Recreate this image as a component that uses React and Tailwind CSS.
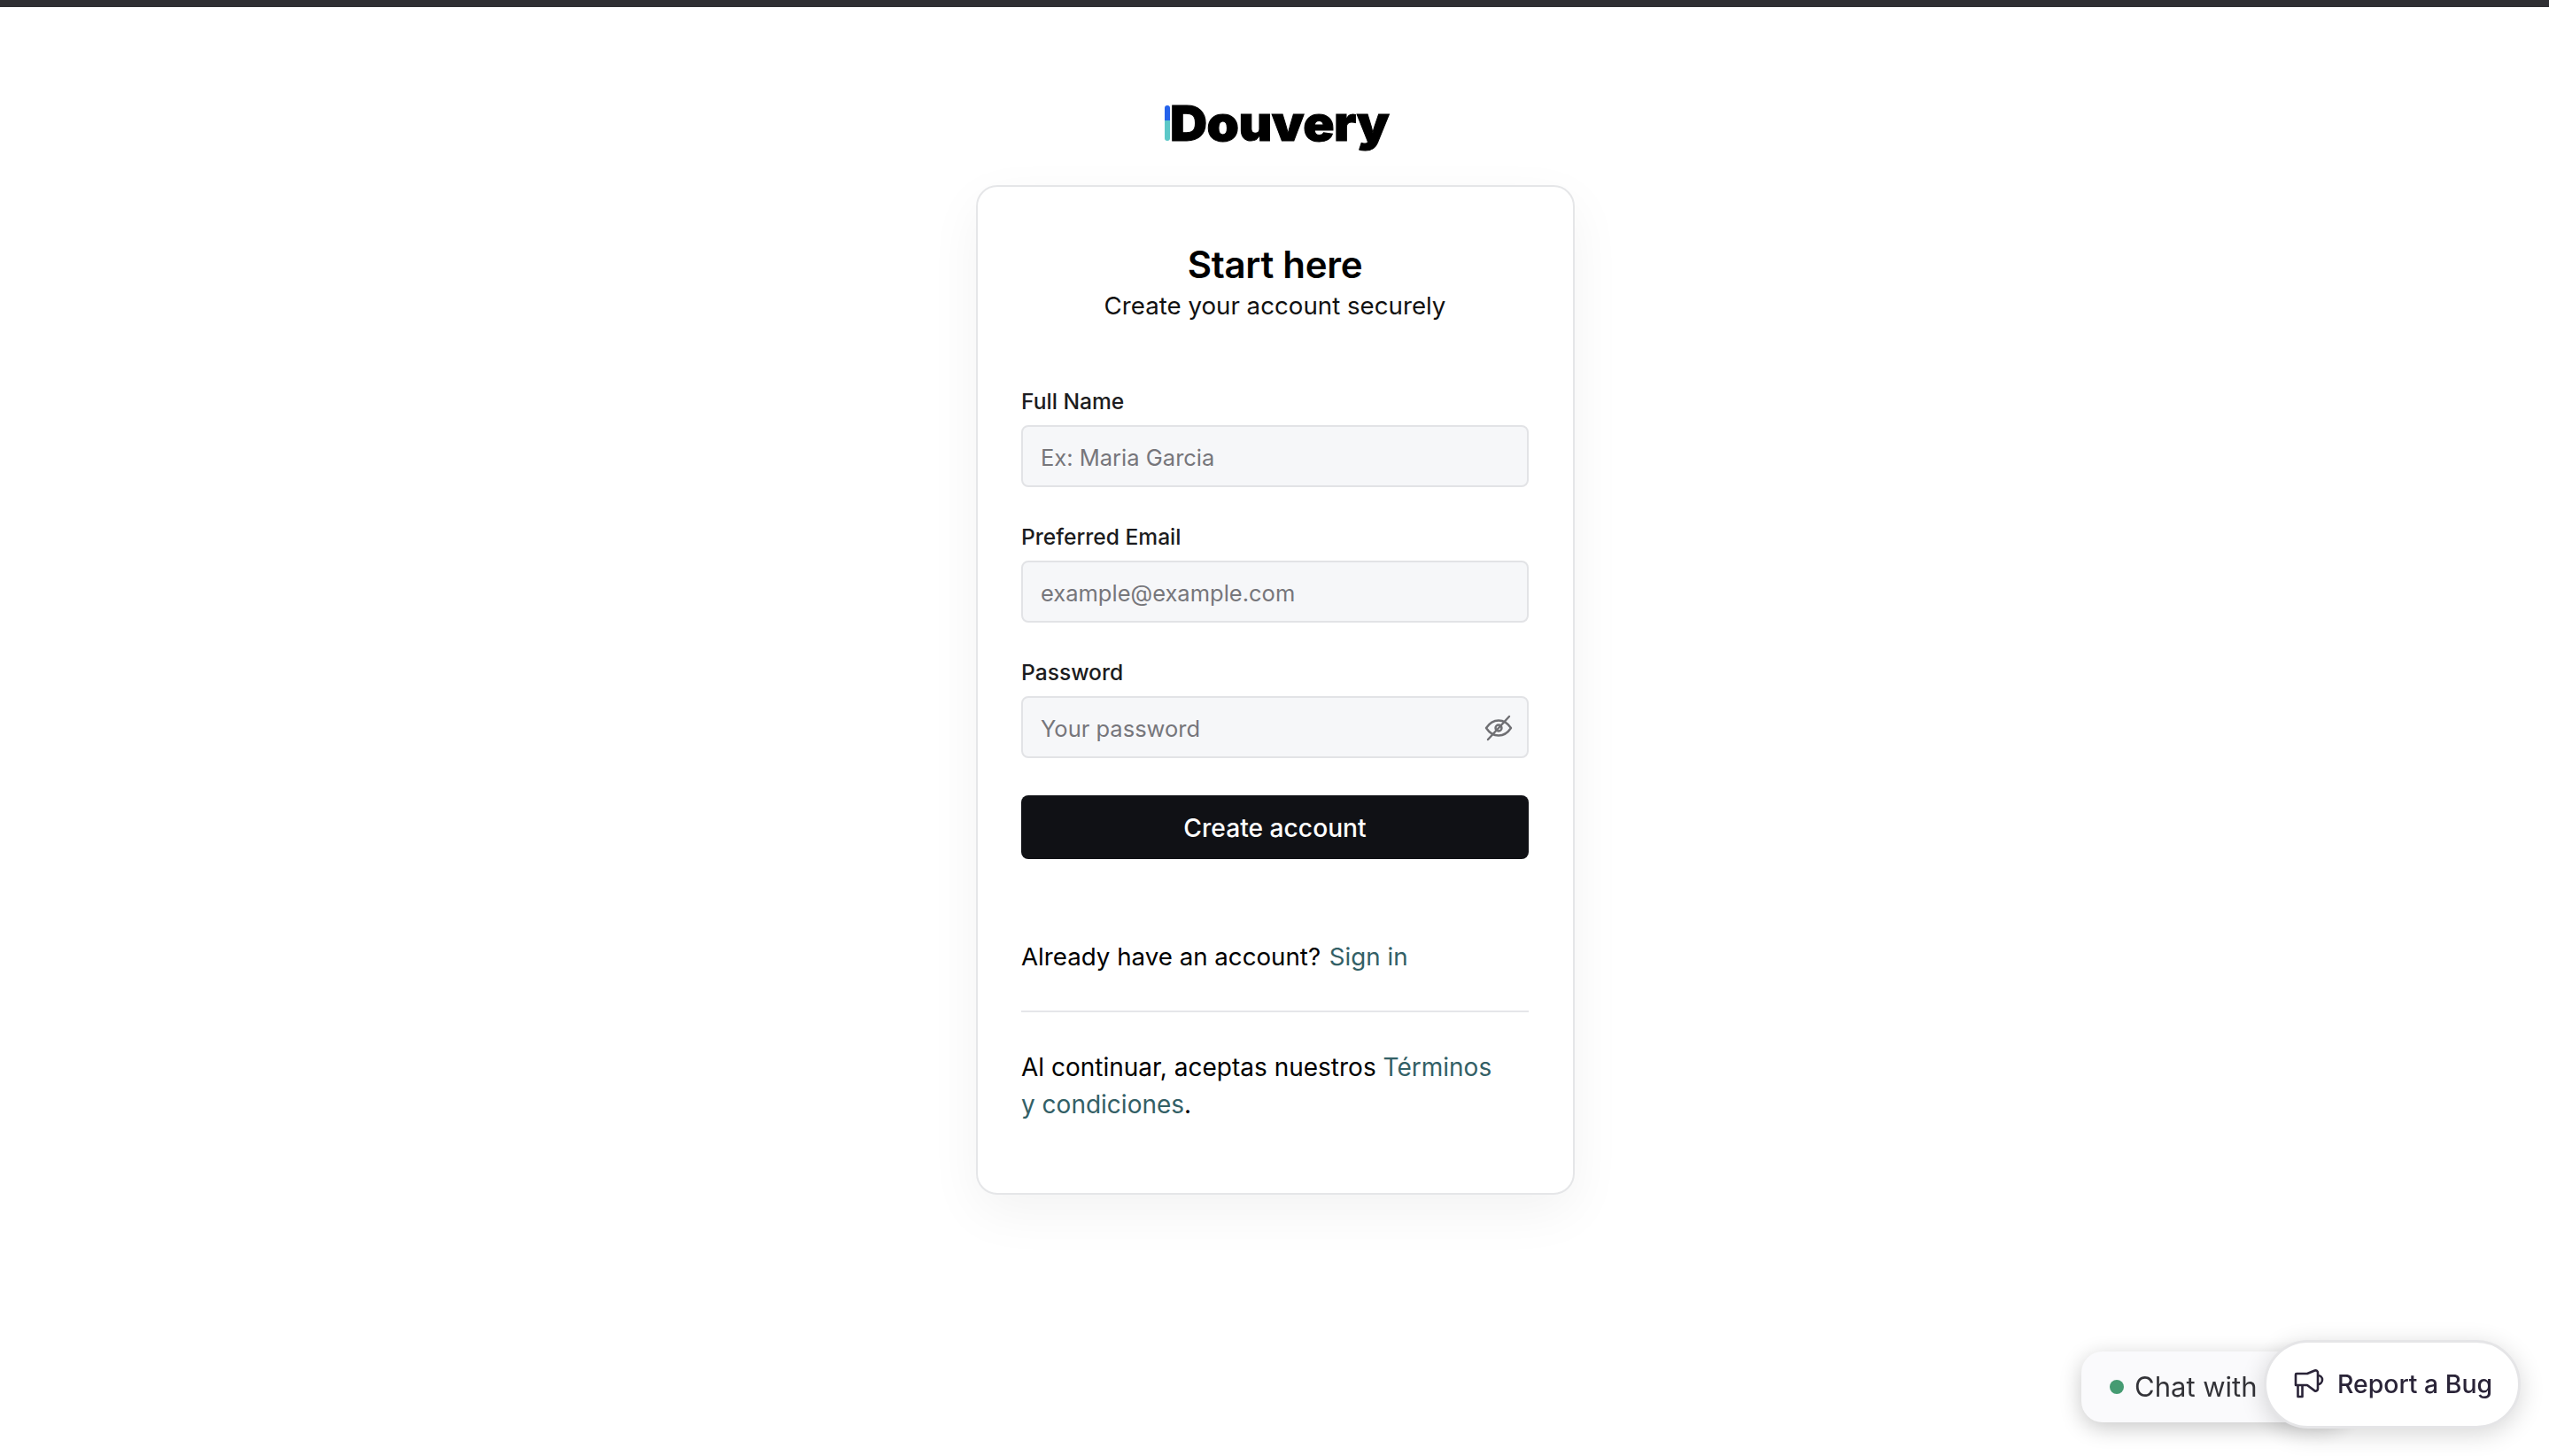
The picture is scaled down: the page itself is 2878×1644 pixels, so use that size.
import React, { useState } from "react";

function EyeOff() {
    return (
        <svg width="32" height="30" viewBox="0 0 32 30" fill="none" stroke="#6f6f73" strokeWidth="2.400" strokeLinecap="round" strokeLinejoin="round">
            <path d="M2 15C6 9 10.500 6.500 16 6.500S26 9 30 15c-4 6-8.500 8.500-14 8.500S6 21 2 15Z" />
            <circle cx="16" cy="15" r="3.500" />
            <path d="M28 2 4 28" />
        </svg>
    );
}

function Megaphone() {
    return (
        <svg width="36" height="36" viewBox="0 0 36 36" fill="none" stroke="#2a2438" strokeWidth="2.600" strokeLinejoin="round">
            <path d="M2 7a1 1 0 0 1 1-1h12l8.500-3.500c1.800-.6 3.500.5 3.500 2.500v18c0 2-1.700 3-3.500 2.400L15 19H2Z" />
            <path d="M4.500 19v13h5V19" />
            <path d="M27 8a5 5 0 0 1 0 10" />
        </svg>
    );
}

function Field({ label, placeholder, type = "text", children }) {
    return (
        <div className="flex flex-col">
            <label className="text-[24.6px] leading-[32px] font-medium text-[#1c1c20] mb-[11px]">{label}</label>
            <div className="relative">
                <input
                    type={type}
                    placeholder={placeholder}
                    className="w-full h-[70px] bg-[#f6f7f9] border-2 border-[#e2e3e6] rounded-[8px] pl-[20px] pr-[60px] pt-[2px] text-[25.5px] text-[#111] placeholder:text-[#76767b] outline-none"
                />
                {children}
            </div>
        </div>
    );
}

export default function App() {
    const [showPassword, setShowPassword] = useState(false);

    return (
        <div className="h-[1644px] overflow-hidden bg-white font-['Inter',sans-serif] text-black">
            <div className="h-[8px] bg-[#2f2f33]"></div>

            <main className="flex flex-col items-center">
                <div className="flex items-start mt-[104px] h-[97px]">
                    <span className="w-[6px] h-[40px] mt-[7px] rounded-full bg-[linear-gradient(#2563eb_0%,#2563eb_42%,#5cc8c8_42%,#5cc8c8_100%)]"></span>
                    <span className="text-[55px] leading-[54px] font-black tracking-[-0.5px] origin-left scale-x-[1.06] mr-[8px] [-webkit-text-stroke:1px_black]">Douvery</span>
                </div>

                <div className="w-[676px] ml-[2px] h-[1140px] bg-white border-2 border-[#e5e6e8] rounded-[24px] shadow-[0_20px_60px_rgba(0,0,0,0.05)] pl-[49px] pr-[50px]">
                    <div className="text-center pt-[61px]">
                        <h1 className="text-[42px] leading-[53px] font-semibold tracking-[-0.3px]">Start here</h1>
                        <p className="text-[27.7px] leading-[40px] text-[#111]">Create your account securely</p>
                    </div>

                    <form className="mt-[72px] flex flex-col" onSubmit={(e) => e.preventDefault()}>
                        <div className="flex flex-col gap-[40px]">
                            <Field label="Full Name" placeholder="Ex: Maria Garcia" />
                            <Field label="Preferred Email" placeholder="example@example.com" />
                            <Field label="Password" placeholder="Your password" type={showPassword ? "text" : "password"}>
                                <button
                                    type="button"
                                    onClick={() => setShowPassword(!showPassword)}
                                    className="absolute right-[18px] top-[21px]"
                                >
                                    <EyeOff />
                                </button>
                            </Field>
                        </div>

                        <button className="mt-[42px] h-[72px] pt-[3px] bg-[#101115] text-white rounded-[8px] text-[28.2px] font-medium">
                            Create account
                        </button>
                    </form>

                    <p className="mt-[90px] text-[27.7px] leading-[40px]">
                        Already have an account? <a href="#" className="ml-[2px] text-[#336066]">Sign in</a>
                    </p>

                    <div className="mt-[41px] h-[2px] bg-[#e5e6ea]"></div>

                    <p className="mt-[41px] text-[28px] leading-[42px]">
                        Al continuar, aceptas nuestros <a href="#" className="text-[#336066]">Términos<br />y condiciones</a>.
                    </p>
                </div>
            </main>

            <div className="fixed left-[2350px] top-[1526px] w-[300px] h-[80px] flex items-center pl-[32px] bg-[#fafafc] rounded-[24px] shadow-[0_6px_24px_rgba(0,0,0,0.22)]">
                <span className="w-[16px] h-[16px] rounded-full bg-[#459b72]"></span>
                <span className="ml-[12px] text-[31px] text-[#333338]">Chat with</span>
            </div>

            <button className="fixed left-[2556px] top-[1513px] w-[290px] h-[100px] flex items-center pl-[31px] bg-white border-[3px] border-[#e5e5e7] rounded-full shadow-[0_6px_28px_rgba(0,0,0,0.16)]">
                <Megaphone />
                <span className="ml-[13px] text-[28.4px] font-medium text-[#2a2438]">Report a Bug</span>
            </button>
        </div>
    );
}
